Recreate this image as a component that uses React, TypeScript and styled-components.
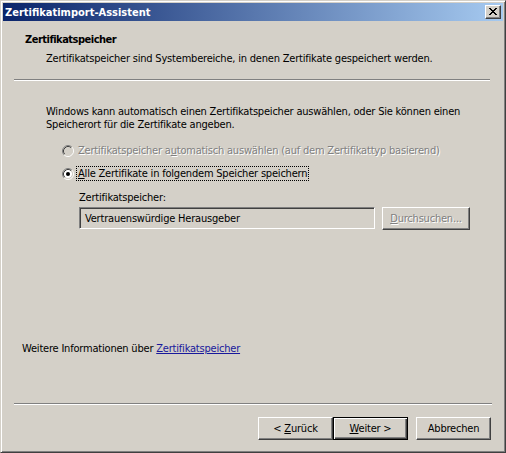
import React from "react";
import styled, { createGlobalStyle } from "styled-components";

const Global = createGlobalStyle`
  html, body { margin: 0; padding: 0; background: #d4d0c8; }
  body {
    font-family: "DejaVu Sans Condensed", "Liberation Sans", sans-serif;
    font-size: 11px;
    letter-spacing: -0.2px;
    color: #000;
  }
`;

const Window = styled.div`
  box-sizing: border-box;
  width: 506px;
  height: 453px;
  background: #d4d0c8;
  border: 1px solid;
  border-color: #d4d0c8 #404040 #404040 #d4d0c8;
  box-shadow: inset 1px 1px #fff, inset -1px -1px #808080;
  padding: 2px;
  display: flex;
  flex-direction: column;
`;

const TitleBar = styled.div`
  height: 18px;
  flex: none;
  display: flex;
  align-items: center;
  justify-content: space-between;
  padding: 0 2px 0 2px;
  background: linear-gradient(to right, #0a246a, #a6caf0);
  color: #fff;
  font-weight: bold;
  font-size: 11px;
  letter-spacing: 0;
`;

const CloseButton = styled.div`
  box-sizing: border-box;
  width: 16px;
  height: 14px;
  background: #d4d0c8;
  border: 1px solid;
  border-color: #fff #404040 #404040 #fff;
  box-shadow: inset -1px -1px #808080;
  display: flex;
  align-items: center;
  justify-content: center;
  padding: 0 1px 1px 0;
`;

const Client = styled.div`
  flex: 1;
  display: flex;
  flex-direction: column;
  line-height: 13px;
`;

const Header = styled.div`
  padding: 12px 0 0 22px;
`;

const HeaderTitle = styled.div`
  font-weight: bold;
  letter-spacing: -0.5px;
`;

const HeaderText = styled.div`
  margin: 6px 0 0 21px;
`;

const Separator = styled.div<{ $top: number; $right: number }>`
  height: 0;
  margin: ${(p) => p.$top}px ${(p) => p.$right}px 0 11px;
  border-top: 1px solid #808080;
  border-bottom: 1px solid #fff;
`;

const Body = styled.div`
  flex: 1;
  padding: 24px 0 0 43px;
  display: flex;
  flex-direction: column;
`;

const Options = styled.div`
  margin: 12px 0 0 16px;
  display: flex;
  flex-direction: column;
  gap: 8px;
`;

const OptionRow = styled.div<{ $disabled?: boolean }>`
  height: 15px;
  display: flex;
  align-items: center;
  gap: 3px;
  color: ${(p) => (p.$disabled ? "#808080" : "#000")};
  text-shadow: ${(p) => (p.$disabled ? "1px 1px #fff" : "none")};
`;

const OptionLabel = styled.span<{ $focus?: boolean }>`
  padding: 0 1px;
  line-height: 13px;
  outline: ${(p) => (p.$focus ? "1px dotted #000" : "none")};
`;

const StoreBlock = styled.div`
  margin: 10px 0 0 33px;
`;

const FieldRow = styled.div`
  margin-top: 3px;
  display: flex;
  align-items: flex-start;
  gap: 7px;
`;

const TextBox = styled.div`
  box-sizing: border-box;
  width: 296px;
  height: 22px;
  border: 1px solid;
  border-color: #808080 #fff #fff #808080;
  box-shadow: inset 1px 1px #404040, inset -1px -1px #d4d0c8;
  background: #d4d0c8;
  padding: 4px 0 0 5px;
  white-space: nowrap;
`;

const Button = styled.div<{ $default?: boolean; $width: number; $disabled?: boolean }>`
  box-sizing: border-box;
  width: ${(p) => p.$width}px;
  height: 23px;
  background: #d4d0c8;
  border: 1px solid;
  border-color: ${(p) => (p.$default ? "#000" : "#fff #404040 #404040 #fff")};
  box-shadow: ${(p) =>
    p.$default
      ? "inset 1px 1px #fff, inset -1px -1px #404040, inset -2px -2px #808080"
      : "inset -1px -1px #808080"};
  display: flex;
  align-items: center;
  justify-content: center;
  padding-bottom: 1px;
  color: ${(p) => (p.$disabled ? "#808080" : "#000")};
  text-shadow: ${(p) => (p.$disabled ? "1px 1px #fff" : "none")};
  white-space: nowrap;
`;

const Info = styled.div`
  padding-left: 19px;
`;

const Link = styled.a`
  color: #18189c;
  text-decoration: underline;
`;

const ButtonRow = styled.div`
  margin: 12px 12px 10px 0;
  display: flex;
  justify-content: flex-end;
`;

const Gap = styled.div`
  width: 8px;
`;

const Radio: React.FC<{ checked?: boolean; disabled?: boolean }> = ({ checked, disabled }) => (
  <svg width="12" height="12" viewBox="0 0 12 12" style={{ flex: "none" }}>
    <circle cx="6" cy="6" r="4.2" fill={disabled ? "#d4d0c8" : "#fff"} />
    <path d="M2.11 9.89 A5.5 5.5 0 0 1 9.89 2.11" fill="none" stroke="#808080" strokeWidth="1" />
    <path d="M9.89 2.11 A5.5 5.5 0 0 1 2.11 9.89" fill="none" stroke="#fff" strokeWidth="1" />
    <path d="M2.82 9.18 A4.5 4.5 0 0 1 9.18 2.82" fill="none" stroke="#404040" strokeWidth="1" />
    <path d="M9.18 2.82 A4.5 4.5 0 0 1 2.82 9.18" fill="none" stroke="#d4d0c8" strokeWidth="1" />
    {checked && <circle cx="6" cy="6" r="2" fill="#000" />}
  </svg>
);

const CloseX = () => (
  <svg width="8" height="7" viewBox="0 0 8 7" shapeRendering="crispEdges">
    <path
      fill="#000"
      d="M0 0h2v1h-2z M6 0h2v1h-2z M1 1h2v1h-2z M5 1h2v1h-2z M2 2h4v1h-4z M3 3h2v1h-2z M2 4h4v1h-4z M1 5h2v1h-2z M5 5h2v1h-2z M0 6h2v1h-2z M6 6h2v1h-2z"
    />
  </svg>
);

export default function App() {
  return (
    <>
      <Global />
      <Window>
        <TitleBar>
          <span>Zertifikatimport-Assistent</span>
          <CloseButton>
            <CloseX />
          </CloseButton>
        </TitleBar>
        <Client>
          <Header>
            <HeaderTitle>Zertifikatspeicher</HeaderTitle>
            <HeaderText>
              Zertifikatspeicher sind Systembereiche, in denen Zertifikate gespeichert werden.
            </HeaderText>
          </Header>
          <Separator $top={14} $right={13} />
          <Body>
            <div>
              Windows kann automatisch einen Zertifikatspeicher auswählen, oder Sie können einen
              <br />
              Speicherort für die Zertifikate angeben.
            </div>
            <Options>
              <OptionRow $disabled>
                <Radio disabled />
                <OptionLabel>
                  Zertifikatspeicher a<u>u</u>tomatisch auswählen (auf dem Zertifikattyp basierend)
                </OptionLabel>
              </OptionRow>
              <OptionRow>
                <Radio checked />
                <OptionLabel $focus>
                  <u>A</u>lle Zertifikate in folgendem Speicher speichern
                </OptionLabel>
              </OptionRow>
            </Options>
            <StoreBlock>
              <div>Zertifikatspeicher:</div>
              <FieldRow>
                <TextBox>Vertrauenswürdige Herausgeber</TextBox>
                <Button $width={88} $disabled>
                  <span>
                    <u>D</u>urchsuchen...
                  </span>
                </Button>
              </FieldRow>
            </StoreBlock>
          </Body>
          <Info>
            Weitere Informationen über <Link>Zertifikatspeicher</Link>
          </Info>
          <Separator $top={48} $right={11} />
          <ButtonRow>
            <Button $width={75}>
              <span>
                &lt; <u>Z</u>urück
              </span>
            </Button>
            <Button $width={75} $default>
              <span>
                <u>W</u>eiter &gt;
              </span>
            </Button>
            <Gap />
            <Button $width={75}>Abbrechen</Button>
          </ButtonRow>
        </Client>
      </Window>
    </>
  );
}
